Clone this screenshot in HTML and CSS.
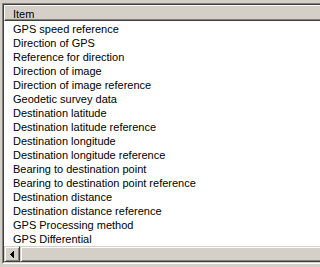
FILE: index.html
```html
<!DOCTYPE html>
<html>
<head>
<meta charset="utf-8">
<link rel="stylesheet" href="styles.css">
</head>
<body>
<div class="frame">
  <div class="edge-outer">
    <div class="edge-inner">
      <div class="header"><span class="header-text">Item</span></div>
      <ul class="rows">
        <li>GPS speed reference</li>
        <li>Direction of GPS</li>
        <li>Reference for direction</li>
        <li>Direction of image</li>
        <li>Direction of image reference</li>
        <li>Geodetic survey data</li>
        <li>Destination latitude</li>
        <li>Destination latitude reference</li>
        <li>Destination longitude</li>
        <li>Destination longitude reference</li>
        <li>Bearing to destination point</li>
        <li>Bearing to destination point reference</li>
        <li>Destination distance</li>
        <li>Destination distance reference</li>
        <li>GPS Processing method</li>
        <li>GPS Differential</li>
      </ul>
      <div class="hscroll">
        <div class="btn">
          <svg class="arrow" width="4" height="7" viewBox="0 0 4 7" shape-rendering="crispEdges">
            <rect x="0" y="3" width="1" height="1" fill="#000"/>
            <rect x="1" y="2" width="1" height="3" fill="#000"/>
            <rect x="2" y="1" width="1" height="5" fill="#000"/>
            <rect x="3" y="0" width="1" height="7" fill="#000"/>
          </svg>
        </div>
        <div class="thumb"></div>
      </div>
    </div>
  </div>
</div>
</body>
</html>
```
FILE: styles.css
```css
html, body {
  margin: 0;
  padding: 0;
  background: #d4d0c8;
  overflow: hidden;
}
.frame {
  padding: 3px 0 0 2px;
}
.edge-outer {
  border-top: 1px solid #808080;
  border-left: 1px solid #808080;
  border-bottom: 1px solid #ffffff;
  height: 259px;
}
.edge-inner {
  border-top: 1px solid #404040;
  border-left: 1px solid #404040;
  border-bottom: 1px solid #d4d0c8;
  background: #ffffff;
  height: 257px;
  display: flex;
  flex-direction: column;
  font-family: "Liberation Sans", Arial, sans-serif;
  font-size: 11px;
  color: #000;
}
.header {
  height: 14px;
  background: #d4d0c8;
  border-top: 1px solid #ffffff;
  border-left: 1px solid #ffffff;
  border-bottom: 1px solid #404040;
  box-shadow: inset 0 -1px 0 #808080;
  display: flex;
  align-items: center;
  padding-left: 8px;
  flex: none;
}
.header-text {
  line-height: 13px;
  position: relative;
  top: 1px;
}
.rows {
  list-style: none;
  margin: 0;
  padding: 0 0 0 9px;
  flex: 1;
  overflow: hidden;
}
.rows li {
  height: 14px;
  line-height: 12px;
  white-space: nowrap;
  padding-top: 2px;
  box-sizing: border-box;
}
.hscroll {
  height: 16px;
  display: flex;
  flex: none;
  background: #ebe9e4;
}
.btn, .thumb {
  box-sizing: border-box;
  height: 16px;
  background: #d4d0c8;
  border-top: 1px solid #d4d0c8;
  border-left: 1px solid #d4d0c8;
  border-bottom: 1px solid #404040;
  box-shadow: inset 1px 1px 0 #ffffff, inset 0 -1px 0 #808080;
}
.btn {
  width: 16px;
  border-right: 1px solid #404040;
  box-shadow: inset 1px 1px 0 #ffffff, inset -1px -1px 0 #808080;
  display: flex;
  align-items: center;
  justify-content: center;
  flex: none;
}
.arrow {
  display: block;
  margin-left: -1px;
}
.thumb {
  flex: 1;
}
```
